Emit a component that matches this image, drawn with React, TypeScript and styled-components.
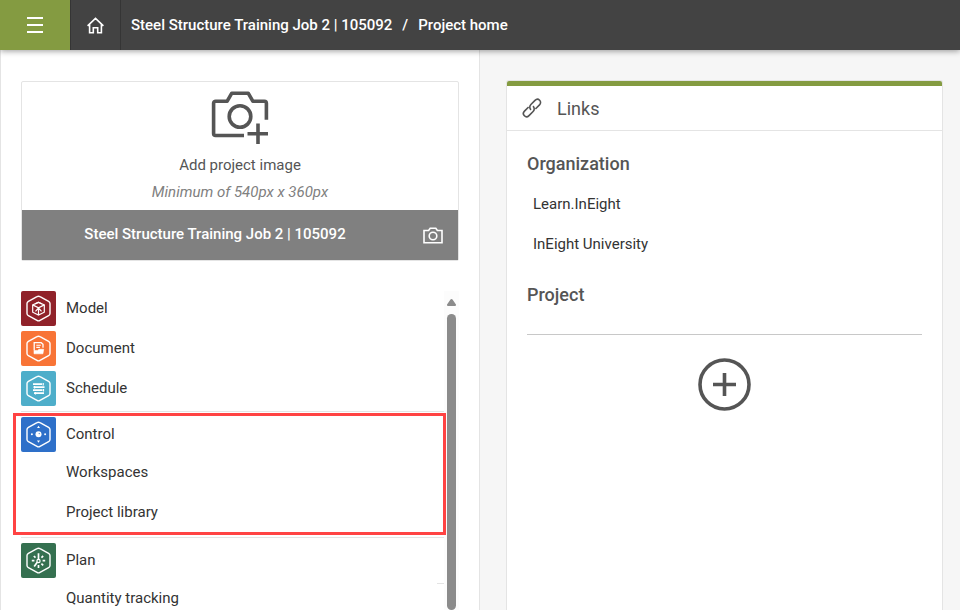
import React from "react";
import styled, { createGlobalStyle } from "styled-components";

const GlobalStyle = createGlobalStyle`
  * { box-sizing: border-box; }
  html, body, #root { height: 100%; }
  body {
    margin: 0;
    overflow: hidden;
    background: #f6f6f6;
    color: #333;
    font: 15px/20px Roboto, "Liberation Sans", sans-serif;
  }
  button { font: inherit; color: inherit; background: none; border: 0; padding: 0; cursor: pointer; }
  a { color: inherit; text-decoration: none; }
  h2, h3, p, ul { margin: 0; padding: 0; }
  ul { list-style: none; }
  svg { display: block; }
`;

const Page = styled.div`
  display: flex;
  flex-direction: column;
  height: 100vh;
`;

const TopBar = styled.header`
  position: relative;
  z-index: 1;
  display: flex;
  align-items: stretch;
  flex: none;
  height: 50px;
  background: #434343;
  color: #fff;
  box-shadow: 0 1px 6px rgba(0, 0, 0, 0.4);
`;

const TopButton = styled.button<{ $wide?: boolean }>`
  display: flex;
  align-items: center;
  justify-content: center;
  width: ${(p) => (p.$wide ? 70 : 51)}px;
  background: ${(p) => (p.$wide ? "#849b41" : "transparent")};
  border-left: ${(p) => (p.$wide ? 0 : 1)}px solid #353535;
  border-right: ${(p) => (p.$wide ? 0 : 1)}px solid #353535;
`;

const Breadcrumb = styled.nav`
  display: flex;
  align-items: center;
  gap: 10px;
  padding-left: 10px;
  font-weight: 500;
  white-space: nowrap;
`;

const Columns = styled.main`
  display: grid;
  grid-template-columns: 1fr 1fr;
  flex: 1;
  min-height: 0;
`;

const ProjectPanel = styled.section`
  display: flex;
  flex-direction: column;
  gap: 30px;
  min-height: 0;
  padding: 31px 20px 0;
  background: #fff;
  border: solid #e4e4e4;
  border-width: 0 1px;
`;

const ImageCard = styled.div`
  flex: none;
  border: 1px solid #e4e4e4;
  border-radius: 2px;
`;

const UploadButton = styled.button`
  display: flex;
  flex-direction: column;
  align-items: center;
  width: 100%;
  height: 128px;
  padding-top: 9px;
  color: #555;
`;

const UploadTitle = styled.span`
  margin-top: 11px;
`;

const UploadHint = styled.em`
  margin-top: 7px;
  color: #808080;
`;

const ImageBar = styled.div`
  display: flex;
  align-items: center;
  gap: 15px;
  height: 50px;
  padding-right: 15px;
  background: #808080;
  color: #fff;
`;

const ImageTitle = styled.h2`
  flex: 1;
  padding-bottom: 2px;
  font-size: 15px;
  font-weight: 500;
  text-align: center;
`;

const ModuleArea = styled.div`
  position: relative;
  display: flex;
  flex: 1;
  min-height: 0;
`;

const ModuleList = styled.nav`
  flex: 1;
  overflow: hidden;
`;

const ModuleGroup = styled.div`
  display: flex;
  flex-direction: column;
  padding-bottom: 5px;
  & + & {
    border-top: 1px solid #e4e4e4;
    padding-top: 5px;
  }
`;

const ModuleStack = styled.div`
  display: flex;
  flex-direction: column;
  gap: 5px;
`;

const ModuleLink = styled.a`
  display: flex;
  gap: 10px;
  height: 35px;
  line-height: 34px;
`;

const ModuleTile = styled.span<{ $color: string }>`
  width: 35px;
  height: 35px;
  border-radius: 2px;
  background: ${(p) => p.$color};
`;

const SubLink = styled.a`
  position: relative;
  display: flex;
  align-items: center;
  height: 40px;
  padding-left: 45px;
`;

const TrackingLink = styled(SubLink)`
  &::after {
    content: "";
    position: absolute;
    top: 5px;
    right: 0;
    width: 7px;
    height: 1px;
    background: #e4e4e4;
  }
`;

const ScrollTrack = styled.div`
  display: flex;
  flex-direction: column;
  align-items: center;
  gap: 8px;
  width: 15px;
  padding-top: 8px;
  background: #fcfcfc;
`;

const ScrollThumb = styled.div`
  flex: 1;
  width: 9px;
  border-radius: 5px;
  background: #8b8b8b;
`;

const Highlight = styled.div`
  position: absolute;
  top: 122px;
  left: -8px;
  right: 13px;
  height: 122px;
  border: 3px solid #ff4343;
  pointer-events: none;
`;

const LinksPanel = styled.section`
  display: flex;
  min-height: 0;
  padding: 30px 17px 0 26px;
`;

const LinksCard = styled.div`
  flex: 1;
  background: #fff;
  border: solid #e4e4e4;
  border-width: 1px 1px 0;
  border-radius: 3px 3px 0 0;
  overflow: hidden;
`;

const LinksHeader = styled.header`
  display: flex;
  align-items: center;
  gap: 15px;
  height: 50px;
  padding-left: 15px;
  border-top: 5px solid #849b41;
  border-bottom: 1px solid #e4e4e4;
  color: #555;
`;

const LinksTitle = styled.h2`
  padding-top: 2px;
  font-size: 18px;
  font-weight: 400;
`;

const LinksBody = styled.div`
  padding: 23px 20px 0;
`;

const SectionTitle = styled.h3`
  font-size: 18px;
  font-weight: 500;
  line-height: 20px;
  color: #555;
`;

const LinkItems = styled.ul`
  padding: 10px 0 21px 6px;
`;

const LinkItem = styled.li`
  display: flex;
  align-items: center;
  height: 40px;
`;

const Divider = styled.hr`
  margin: 29px 0 23px;
  border: 0;
  border-top: 1px solid #c8c8c8;
`;

const AddButton = styled.button`
  display: block;
  margin: 0 auto;
`;

const HEX = "M17.5 5.2c.5 0 1 .1 1.5.4l8.6 4.8c.9.5 1.4 1.2 1.4 2.2v9.8c0 1-.5 1.7-1.4 2.2L19 29.4c-1 .6-2 .6-3 0l-8.6-4.8c-.9-.5-1.400-1.2-1.400-2.2v-9.8c0-1 .5-1.7 1.400-2.200L16 5.600c.5-.3 1-.4 1.500-.4z";

type GlyphName = "model" | "document" | "schedule" | "control" | "plan";

const glyphs: Record<GlyphName, React.ReactNode> = {
  model: (
    <g strokeWidth="1.2">
      <path d="M17.5 11.2l5.8 2.7v7.3l-5.8 2.8-5.8-2.8v-7.3z" />
      <path d="M11.7 13.9l5.8 3 5.8-3M17.5 16.9V24M14.2 15.3l3.3 1.6 3.3-1.6M17.5 16.9l-3 3.4M17.5 16.9l3 3.4M14.2 12.9l3.3-1.5 3.3 1.5" />
    </g>
  ),
  document: (
    <g strokeWidth="1.3">
      <path d="M13.2 19.5v-7.8h7l1.8 1.6v3.4" />
      <path d="M15.3 14.2h4.5M15.3 16.4h3.6" strokeWidth="1.1" />
      <path d="M13 22.800v-3.200h3.800l1-1.300h4.900l-.8 4.500z" fill="#fff" strokeWidth=".6" />
    </g>
  ),
  schedule: (
    <g strokeWidth="1.8">
      <path d="M12 13.2h9M12.5 16.2h11M12 19.2h9.5M13 22.2h10" />
      <path d="M22.2 12v2.4M13.6 15v2.4M22.5 18v2.4M14.5 21v2.4" strokeWidth="1.2" />
    </g>
  ),
  control: (
    <g fill="#fff" stroke="none">
      <circle cx="17.5" cy="17.3" r="3" />
      <path d="M17.5 8.8l1.5 2.2h-3zM17.5 25.8l1.5-2.2h-3z" />
      <circle cx="10.9" cy="17.3" r="1" />
      <circle cx="24.1" cy="17.3" r="1" />
      <circle cx="18.2" cy="16.6" r=".6" fill="#2e70c9" />
    </g>
  ),
  plan: (
    <g strokeWidth="1.7">
      <path d="M17.5 10.2v7.5M16.8 18.5l-3.6 5M17.5 22v3M12.8 13l1.7 1.6M22.2 13l-1.8 1.6M10.8 17.7h2.6M21.6 17.7h2.6M20.4 20.7l1.8 1.7" />
      <circle cx="17.5" cy="18" r="1.6" fill="#357050" strokeWidth="1.2" />
    </g>
  ),
};

function ModuleGlyph({ name }: { name: GlyphName }) {
  return (
    <svg width="35" height="35" viewBox="0 0 35 35" fill="none" stroke="#fff" aria-hidden="true">
      <path d={HEX} strokeWidth="1.4" />
      {glyphs[name]}
    </svg>
  );
}

function Module({ name, color, label }: { name: GlyphName; color: string; label: string }) {
  return (
    <ModuleLink href="#">
      <ModuleTile $color={color}>
        <ModuleGlyph name={name} />
      </ModuleTile>
      {label}
    </ModuleLink>
  );
}

const PROJECT = "Steel Structure Training Job 2 | 105092";

export default function App() {
  return (
    <Page>
      <GlobalStyle />
      <TopBar>
        <TopButton $wide aria-label="Menu">
          <svg width="16" height="16" viewBox="0 0 16 16" stroke="#fff" strokeWidth="2">
            <path d="M0 1h16M0 8h16M0 15h16" />
          </svg>
        </TopButton>
        <TopButton aria-label="Home">
          <svg width="17" height="17" viewBox="0 0 17 17" fill="none" stroke="#fff" strokeWidth="1.6">
            <path d="M.6 8.800L8.500 1.400l7.900 7.400M2.600 7.200v8.500h3.700v-4.900h4.400v4.900h3.700V7.200" />
          </svg>
        </TopButton>
        <Breadcrumb aria-label="Breadcrumb">
          <a href="#">{PROJECT}</a>
          <span>/</span>
          <a href="#">Project home</a>
        </Breadcrumb>
      </TopBar>
      <Columns>
        <ProjectPanel>
          <ImageCard>
            <UploadButton>
              <svg width="58" height="53" viewBox="0 0 58 53" fill="none" stroke="#555" strokeWidth="3.6" aria-hidden="true">
                <path d="M33 44.5H4.6a2 2 0 0 1-2-2V12.2a2 2 0 0 1 2-2h11.6l4.6-8h16.4l4.6 8h11.6a2 2 0 0 1 2 2v16.6" strokeLinejoin="round" />
                <circle cx="29" cy="25.5" r="10.8" />
                <path d="M47 32.5V53M36.5 42.8H57" />
              </svg>
              <UploadTitle>Add project image</UploadTitle>
              <UploadHint>Minimum of 540px x 360px</UploadHint>
            </UploadButton>
            <ImageBar>
              <ImageTitle>{PROJECT}</ImageTitle>
              <button aria-label="Change project image">
                <svg width="20" height="17" viewBox="0 0 20 17" fill="none" stroke="#fff" strokeWidth="1.6">
                  <path d="M1 3.5h4.6l1.6-2.3h5.6l1.6 2.3H19v12.3H1z" />
                  <circle cx="10" cy="9" r="3.8" />
                </svg>
              </button>
            </ImageBar>
          </ImageCard>
          <ModuleArea>
            <ModuleList aria-label="Modules">
              <ModuleGroup>
                <ModuleStack>
                  <Module name="model" color="#90222a" label="Model" />
                  <Module name="document" color="#f87436" label="Document" />
                  <Module name="schedule" color="#4eaeca" label="Schedule" />
                </ModuleStack>
              </ModuleGroup>
              <ModuleGroup>
                <Module name="control" color="#2e70c9" label="Control" />
                <SubLink href="#">Workspaces</SubLink>
                <SubLink href="#">Project library</SubLink>
              </ModuleGroup>
              <ModuleGroup>
                <Module name="plan" color="#357050" label="Plan" />
                <TrackingLink href="#">Quantity tracking</TrackingLink>
              </ModuleGroup>
            </ModuleList>
            <ScrollTrack>
              <svg width="9" height="7" viewBox="0 0 9 7" fill="#8b8b8b" aria-hidden="true">
                <path d="M4.5 0c.4 0 .8.2 1 .5L8.8 5.2c.5.9.1 1.8-.8 1.8H1C.1 7-.3 6.1.2 5.2L3.500.5c.2-.3.6-.5 1-.5z" />
              </svg>
              <ScrollThumb />
            </ScrollTrack>
            <Highlight />
          </ModuleArea>
        </ProjectPanel>
        <LinksPanel>
          <LinksCard>
            <LinksHeader>
              <svg width="20" height="20" viewBox="0 0 20 20" fill="none" stroke="#555" strokeWidth="1.6" aria-hidden="true">
                <path d="M9 11.8C7.400 10.300 7.400 8 8.900 6.500l4.100-4.100c1.400-1.400 3.300-1.500 4.600-.2s1.300 3.300-.1 4.700l-4.100 4.100" />
                <path d="M11 8.200c1.600 1.500 1.600 3.800.1 5.300L7 17.600c-1.400 1.400-3.300 1.500-4.600.2s-1.300-3.300.1-4.700L6.600 9" />
              </svg>
              <LinksTitle>Links</LinksTitle>
            </LinksHeader>
            <LinksBody>
              <SectionTitle>Organization</SectionTitle>
              <LinkItems>
                <LinkItem><a href="#">Learn.InEight</a></LinkItem>
                <LinkItem><a href="#">InEight University</a></LinkItem>
              </LinkItems>
              <SectionTitle>Project</SectionTitle>
              <Divider />
              <AddButton aria-label="Add link">
                <svg width="53" height="53" viewBox="0 0 53 53" fill="none" stroke="#555" strokeWidth="3.6">
                  <circle cx="26.5" cy="26.5" r="24.5" />
                  <path d="M26.5 15v23M15 26.5h23" />
                </svg>
              </AddButton>
            </LinksBody>
          </LinksCard>
        </LinksPanel>
      </Columns>
    </Page>
  );
}
